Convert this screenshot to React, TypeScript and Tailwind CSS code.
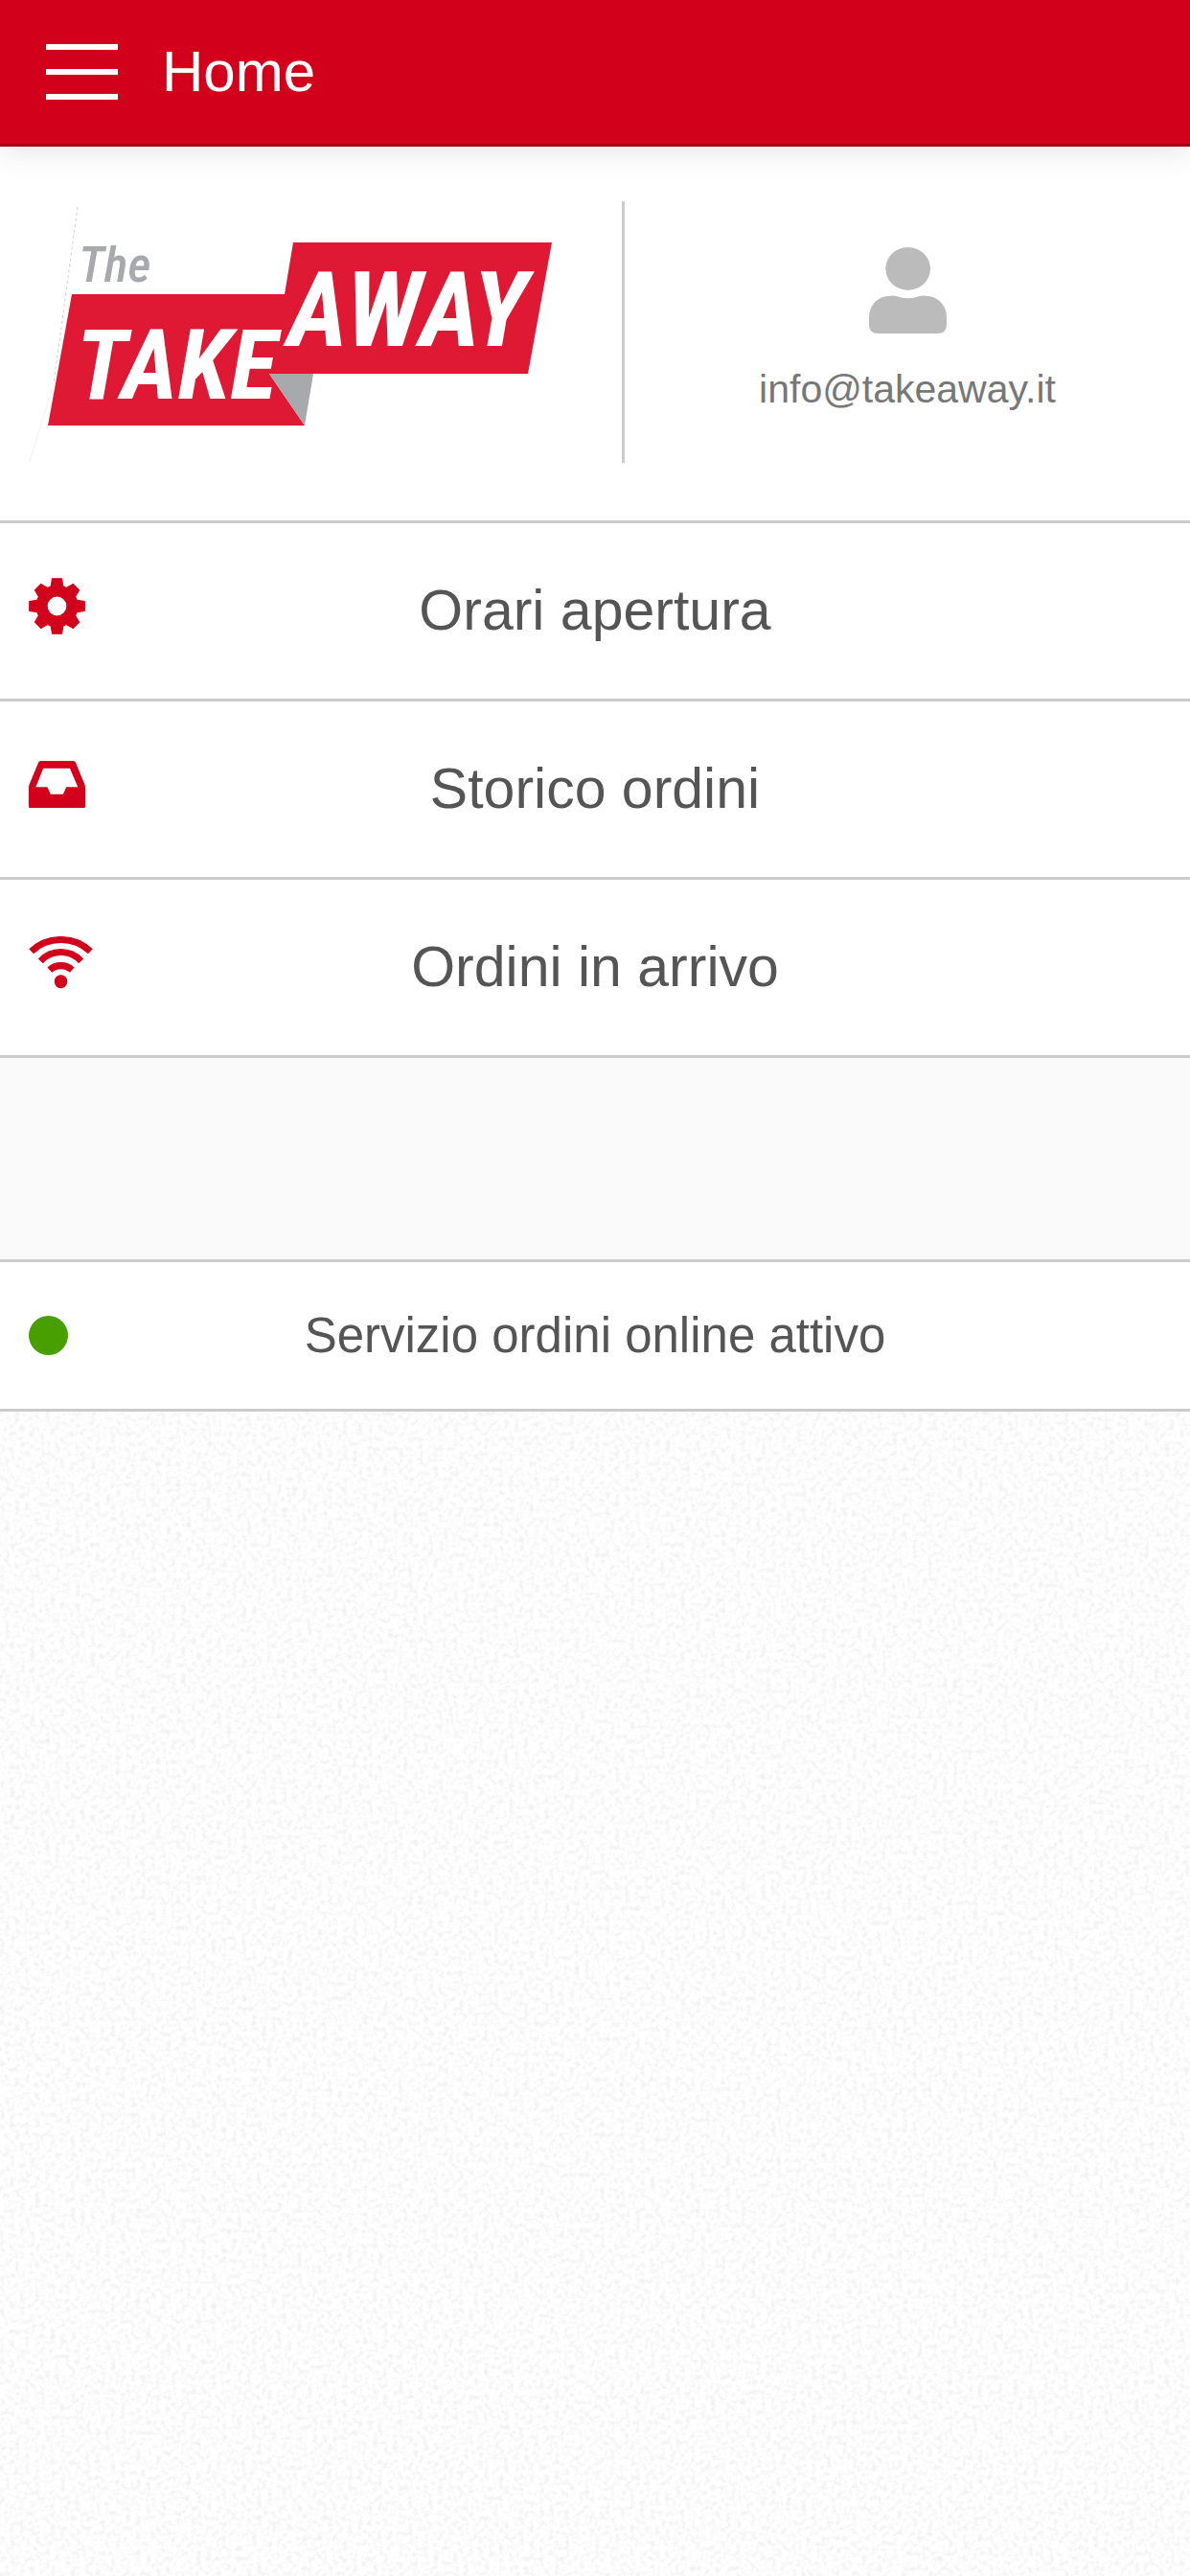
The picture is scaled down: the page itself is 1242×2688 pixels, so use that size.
import type { ReactNode } from 'react';

interface MenuItem {
  label: string;
  href: string;
  icon: ReactNode;
}

function GearIcon() {
  return (
    <svg viewBox="-88 -88 176 176" className="w-[59px]" fill="currentColor" stroke="currentColor" strokeWidth="3" strokeLinejoin="round" aria-hidden="true">
      <path
        fillRule="evenodd"
        d="M-15-86H15L19-62Q24-60 29-57L50-69L69-50L57-29Q60-24 62-19L86-15V15L62 19Q60 24 57 29L69 50L50 69L29 57Q24 60 19 62L15 86H-15L-19 62Q-24 60-29 57L-50 69L-69 50L-57 29Q-60 24-62 19L-86 15V-15L-62-19Q-60-24-57-29L-69-50L-50-69L-29-57Q-24-60-19-62ZM0-31A31 31 0 1 0 0 31A31 31 0 1 0 0-31Z"
      />
    </svg>
  );
}

function InboxIcon() {
  return (
    <svg viewBox="90 162 176 147" className="w-[59px]" fill="currentColor" aria-hidden="true">
      <path
        fillRule="evenodd"
        d="M127 162H229Q234 162 236 167L262 230Q266 238 266 244V303Q266 309 260 309H96Q90 309 90 303V244Q90 238 94 230L120 167Q122 162 127 162ZM135 185L112 243H148L158 266H197L207 243H243L218 185Z"
      />
    </svg>
  );
}

function WifiIcon() {
  return (
    <svg viewBox="90 114 200 162" className="w-[67px]" fill="none" stroke="currentColor" strokeWidth="21" aria-hidden="true">
      <path d="M98 161A134 134 0 0 1 282 161" />
      <path d="M127 191A86 86 0 0 1 253 191" />
      <path d="M155 219A52 52 0 0 1 225 219" />
      <ellipse cx="190" cy="255" rx="20" ry="21" fill="currentColor" stroke="none" />
    </svg>
  );
}

function UserIcon() {
  return (
    <svg viewBox="438 114 243 270" className="w-[81px] text-[#bbbbbb]" fill="currentColor" aria-hidden="true">
      <ellipse cx="560" cy="181" rx="70" ry="67" />
      <path d="M438 335Q438 303 458 284Q478 265 505 266Q516 264 526 268Q560 280 594 268Q604 265 614 266Q641 265 661 284Q681 303 681 335V357Q681 384 652 384H467Q438 384 438 357Z" />
    </svg>
  );
}

function Logo() {
  return (
    <svg viewBox="30 210 590 273" className="w-full max-w-[590px]" role="img" aria-label="The Take Away">
      <path d="M81 216L56 400" fill="none" stroke="#d0d0d0" strokeWidth="1" strokeDasharray="3 3" />
      <path d="M56 400L31 482" fill="none" stroke="#f0f0f0" strokeWidth="1" />
      <path d="M75 307H297L306 253H576L551 390H281L318 444H50Z" fill="#df1834" />
      <g fontStyle="italic" fontFamily="'Roboto Condensed', 'Liberation Sans Narrow', 'Liberation Sans', sans-serif">
        <text x="82" y="294" fontSize="52" fontWeight="500" fill="#a7a9ac">The</text>
        <text x="79" y="416" fontSize="102" fontWeight="700" fill="#ffffff">TAKE</text>
        <text x="300" y="361" fontSize="109" fontWeight="700" fill="#ffffff">AWAY</text>
      </g>
      <path d="M281 390H327L318 444Z" fill="#a7a9ac" />
    </svg>
  );
}

// Light paper grain used as the page background
function PaperTexture() {
  return (
    <svg className="h-full w-full" aria-hidden="true">
      <filter id="paper" x="0" y="0" width="100%" height="100%">
        <feTurbulence type="fractalNoise" baseFrequency="0.19" numOctaves="3" seed="4" />
        <feColorMatrix values="0 0 0 0 0.88  0 0 0 0 0.88  0 0 0 0 0.88  2.6 0 0 0 -1.12" />
      </filter>
      <rect width="100%" height="100%" filter="url(#paper)" />
    </svg>
  );
}

const MENU_ITEMS: MenuItem[] = [
  { label: 'Orari apertura', href: '#orari', icon: <GearIcon /> },
  { label: 'Storico ordini', href: '#storico', icon: <InboxIcon /> },
  { label: 'Ordini in arrivo', href: '#arrivo', icon: <WifiIcon /> },
];

export default function App() {
  return (
    <div className="flex min-h-screen flex-col bg-white font-['Liberation_Sans',Arial,sans-serif] text-[#555555]">
      {/* Top bar */}
      <header className="z-10 flex items-center gap-[46px] border-b-3 border-[#a30015] bg-[#d3001b] px-12 py-[30px] text-white shadow-[0_6px_30px_rgba(0,0,0,0.1)]">
        <button type="button" aria-label="Menu" className="flex w-[75px] flex-col gap-5">
          <span className="h-[6px] w-full bg-white" />
          <span className="h-[6px] w-full bg-white" />
          <span className="h-[6px] w-full bg-white" />
        </button>
        <h1 className="text-[60px] leading-[90px]">Home</h1>
      </header>

      {/* Restaurant logo and account */}
      <section className="grid grid-cols-[652fr_590fr] border-b-3 border-[#cccccc] pt-[57px] pb-[60px]">
        <div className="border-r-3 border-[#cccccc] pl-[30px]">
          <Logo />
        </div>
        <div className="flex flex-col items-center pt-12">
          <UserIcon />
          <a href="mailto:info@takeaway.it" className="mt-8 text-[41px] leading-[52px] text-[#777777]">
            info@takeaway.it
          </a>
        </div>
      </section>

      {/* Menu */}
      <nav>
        {MENU_ITEMS.map((item) => (
          <a
            key={item.href}
            href={item.href}
            className="grid grid-cols-[80px_1fr_80px] items-center border-b-3 border-[#cccccc] px-[30px] py-[51px]"
          >
            <span className="pb-[10px] text-[#d3001b]">{item.icon}</span>
            <span className="text-center text-[59px] leading-[81px]">{item.label}</span>
          </a>
        ))}
      </nav>

      <div className="h-[213px] border-b-3 border-[#cccccc] bg-[#fafafa]" />

      {/* Service status */}
      <div className="grid grid-cols-[80px_1fr_80px] items-center border-b-3 border-[#cccccc] px-[30px] py-[42px]">
        <span className="size-[41px] rounded-full bg-[#479f00]" />
        <span className="text-center text-[51px] leading-[69px]">Servizio ordini online attivo</span>
      </div>

      <div className="flex-1 basis-0 overflow-hidden">
        <PaperTexture />
      </div>
    </div>
  );
}
